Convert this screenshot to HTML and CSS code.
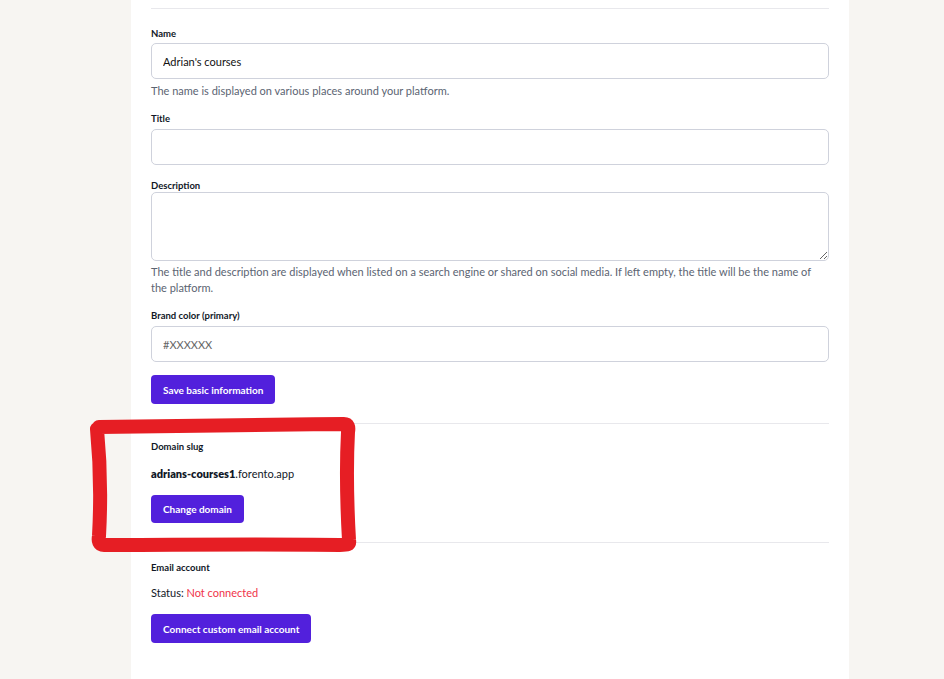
FILE: index.html
```html
<!DOCTYPE html>
<html>
<head>
<meta charset="utf-8">
<link rel="stylesheet" href="styles.css">
</head>
<body>
<div class="page">
  <div class="panel">
    <div class="section first">
      <div class="field f-name">
        <label class="label l-name">Name</label>
        <input class="input" type="text" value="Adrian's courses">
        <p class="help">The name is displayed on various places around your platform.</p>
      </div>
      <div class="field">
        <label class="label">Title</label>
        <input class="input" type="text" value="">
      </div>
      <div class="field f-desc">
        <label class="label tight">Description</label>
        <textarea class="textarea"></textarea>
        <p class="help">The title and description are displayed when listed on a search engine or shared on social media. If left empty, the title will be the name of the platform.</p>
      </div>
      <div class="field last">
        <label class="label">Brand color (primary)</label>
        <input class="input" type="text" placeholder="#XXXXXX">
      </div>
      <button class="btn">Save basic information</button>
    </div>
    <div class="section domain">
      <div class="label">Domain slug</div>
      <p class="value"><strong>adrians-courses1</strong>.forento.app</p>
      <button class="btn small">Change domain</button>
    </div>
    <div class="section email">
      <div class="label">Email account</div>
      <p class="value">Status: <span class="bad">Not connected</span></p>
      <button class="btn">Connect custom email account</button>
    </div>
  </div>
</div>
<svg class="mark" width="944" height="679" viewBox="0 0 944 679">
  <path d="M99 427 C150 426, 250 425, 344 424 C348 424, 349 427, 348 432 C346 470, 347 505, 349 540 C350 545, 347 545, 340 545 C260 544, 170 545, 104 545 C99 545, 98 541, 99 536 C101 500, 100 460, 97 429" fill="none" stroke="#e61e24" stroke-width="14" stroke-linecap="round" stroke-linejoin="round"/>
</svg>
</body>
</html>
```

FILE: styles.css
```css
* { box-sizing: border-box; }
html, body { margin: 0; padding: 0; }
body {
  background: #f7f5f2;
  font-family: Lato, "Liberation Sans", sans-serif;
  color: #111827;
  width: 944px;
  height: 679px;
  overflow: hidden;
  position: relative;
}
.page {
  display: flex;
  justify-content: flex-start;
  padding-left: 131px;
}
.panel {
  width: 718px;
  height: 679px;
  background: #fff;
  padding: 0 20px;
}
.section {
  border-top: 1px solid #e8e8ec;
  display: flex;
  flex-direction: column;
  align-items: flex-start;
  padding: 17px 0 18px;
}
.section.first {
  margin-top: 8px;
  padding-top: 19px;
  padding-bottom: 19px;
}
.section.domain { padding-bottom: 19px; }
.section.email { padding-top: 19px; }
.field {
  width: 100%;
  display: flex;
  flex-direction: column;
  margin-bottom: 15px;
}
.field.f-name { margin-bottom: 14px; }
.field.f-desc { margin-bottom: 14px; }
.field.last { margin-bottom: 13px; }
.label {
  display: block;
  font-size: 9.5px;
  font-weight: 700;
  line-height: 12px;
  margin-bottom: 4px;
  color: #111827;
}
.label.l-name { margin-bottom: 3px; }
.label.tight { margin-bottom: 0; }
.input, .textarea {
  width: 100%;
  border: 1px solid #cfd2dc;
  border-radius: 5px;
  background: #fff;
  font-family: inherit;
  font-size: 11px;
  color: #111;
  padding: 0 11px;
  outline: none;
  margin: 0;
}
.input { height: 36px; }
.input::placeholder { color: #666; }
.textarea {
  height: 69px;
  resize: vertical;
  display: block;
}
.help {
  margin: 4px 0 0;
  font-size: 11px;
  line-height: 16px;
  color: #5b6472;
}
.f-desc .help { margin-top: 3px; }
.btn {
  background: #5220dc;
  color: #fff;
  border: none;
  border-radius: 4px;
  font-family: inherit;
  font-weight: 700;
  font-size: 10px;
  height: 29px;
  padding: 0 12px;
  margin: 0;
  cursor: pointer;
}
.btn.small { height: 28px; }
.value {
  margin: 10px 0 14px;
  font-size: 11px;
  line-height: 14px;
  color: #111827;
}
.email .value { margin: 8px 0 14px; }
.value strong { font-weight: 800; }
.bad { color: #f0334a; }
.mark {
  position: absolute;
  left: 0;
  top: 0;
  pointer-events: none;
}
```
